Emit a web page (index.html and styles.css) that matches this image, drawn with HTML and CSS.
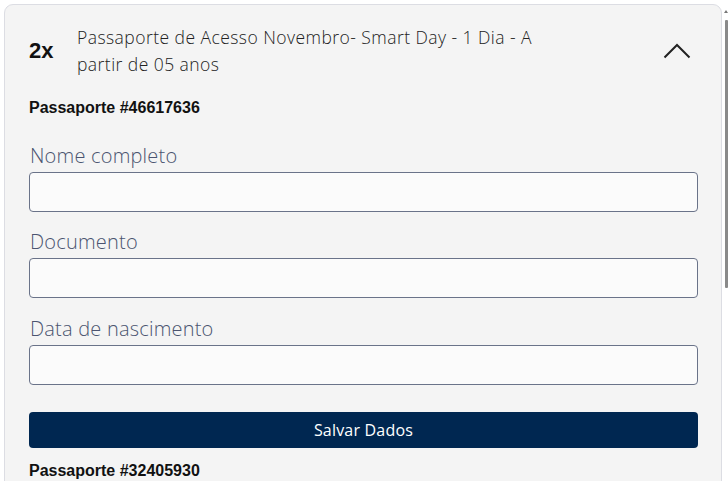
FILE: index.html
```html
<!DOCTYPE html>
<html lang="pt">
<head>
<meta charset="utf-8">
<title>Passaporte</title>
<link rel="stylesheet" href="styles.css">
</head>
<body>
<div class="card">
  <div class="header">
    <div class="qty">2x</div>
    <div class="title">Passaporte de Acesso Novembro- Smart Day - 1 Dia - A partir de 05 anos</div>
    <svg class="chev" width="28" height="16" viewBox="0 0 28 16"><path d="M1.5 14.5 L14 2 L26.5 14.5" fill="none" stroke="#222" stroke-width="2"/></svg>
  </div>
  <div class="pass">
    <div class="pass-title">Passaporte #46617636</div>
    <div class="field">
      <label class="label">Nome completo</label>
      <input class="input" type="text">
    </div>
    <div class="field">
      <label class="label">Documento</label>
      <input class="input" type="text">
    </div>
    <div class="field field-last">
      <label class="label">Data de nascimento</label>
      <input class="input" type="text">
    </div>
    <button class="save">Salvar Dados</button>
  </div>
  <div class="pass">
    <div class="pass-title">Passaporte #32405930</div>
  </div>
</div>
<div class="scrollbar"><span class="arrow"></span><span class="thumb"></span></div>
</body>
</html>
```

FILE: styles.css
```css
html, body {
  margin: 0;
  padding: 0;
  background: #ffffff;
  overflow: hidden;
  height: 481px;
}
body {
  padding: 4px 6px 0 4px;
  font-family: "Open Sans", "Liberation Sans", sans-serif;
  color: #222;
}
.card {
  background: #f4f4f4;
  border: 1px solid #dcdde3;
  border-radius: 9px;
  padding: 0 23px 40px 24px;
}
.header {
  display: flex;
  align-items: center;
  padding-top: 19px;
}
.qty {
  width: 48px;
  font-family: "Liberation Sans", Arial, sans-serif;
  font-weight: bold;
  font-size: 22px;
  color: #111;
}
.title {
  width: 490px;
  font-size: 17.5px;
  font-weight: 300;
  line-height: 27px;
  letter-spacing: 0.45px;
  color: #222;
}
.chev {
  margin-left: auto;
  margin-right: 7px;
}
.pass {
  display: flex;
  flex-direction: column;
}
.pass-title {
  font-family: "Liberation Sans", Arial, sans-serif;
  font-weight: bold;
  font-size: 16px;
  line-height: 18px;
  margin-top: 21px;
  color: #111;
}
.field {
  display: flex;
  flex-direction: column;
  margin-top: 18px;
}
.pass-title + .field {
  margin-top: 27px;
}
.field-last {
  margin-top: 19px;
}
.label {
  font-size: 20px;
  font-weight: 300;
  line-height: 24px;
  letter-spacing: 0.2px;
  color: #4b5470;
  margin-bottom: 4px;
  padding-left: 1px;
}
.input {
  box-sizing: border-box;
  height: 40px;
  width: 100%;
  margin: 0;
  border: 1px solid #6a7389;
  border-radius: 4px;
  background: #fbfbfb;
}
.save {
  margin-top: 27px;
  height: 36px;
  border: none;
  border-radius: 4px;
  background: #002751;
  color: #fff;
  font-family: "Open Sans", sans-serif;
  font-size: 16px;
  font-weight: 500;
  letter-spacing: 0.2px;
}
.pass + .pass .pass-title {
  margin-top: 14px;
}
.scrollbar {
  position: absolute;
  top: 0;
  right: 0;
  width: 4px;
  height: 481px;
}
.arrow {
  position: absolute;
  top: 10px;
  left: 0;
  width: 0;
  height: 0;
  border-left: 2px solid transparent;
  border-right: 2px solid transparent;
  border-bottom: 3px solid #777;
}
.thumb {
  position: absolute;
  top: 20px;
  left: 1px;
  width: 3px;
  height: 268px;
  background: #8a8a8a;
  border-radius: 1px;
}
```
